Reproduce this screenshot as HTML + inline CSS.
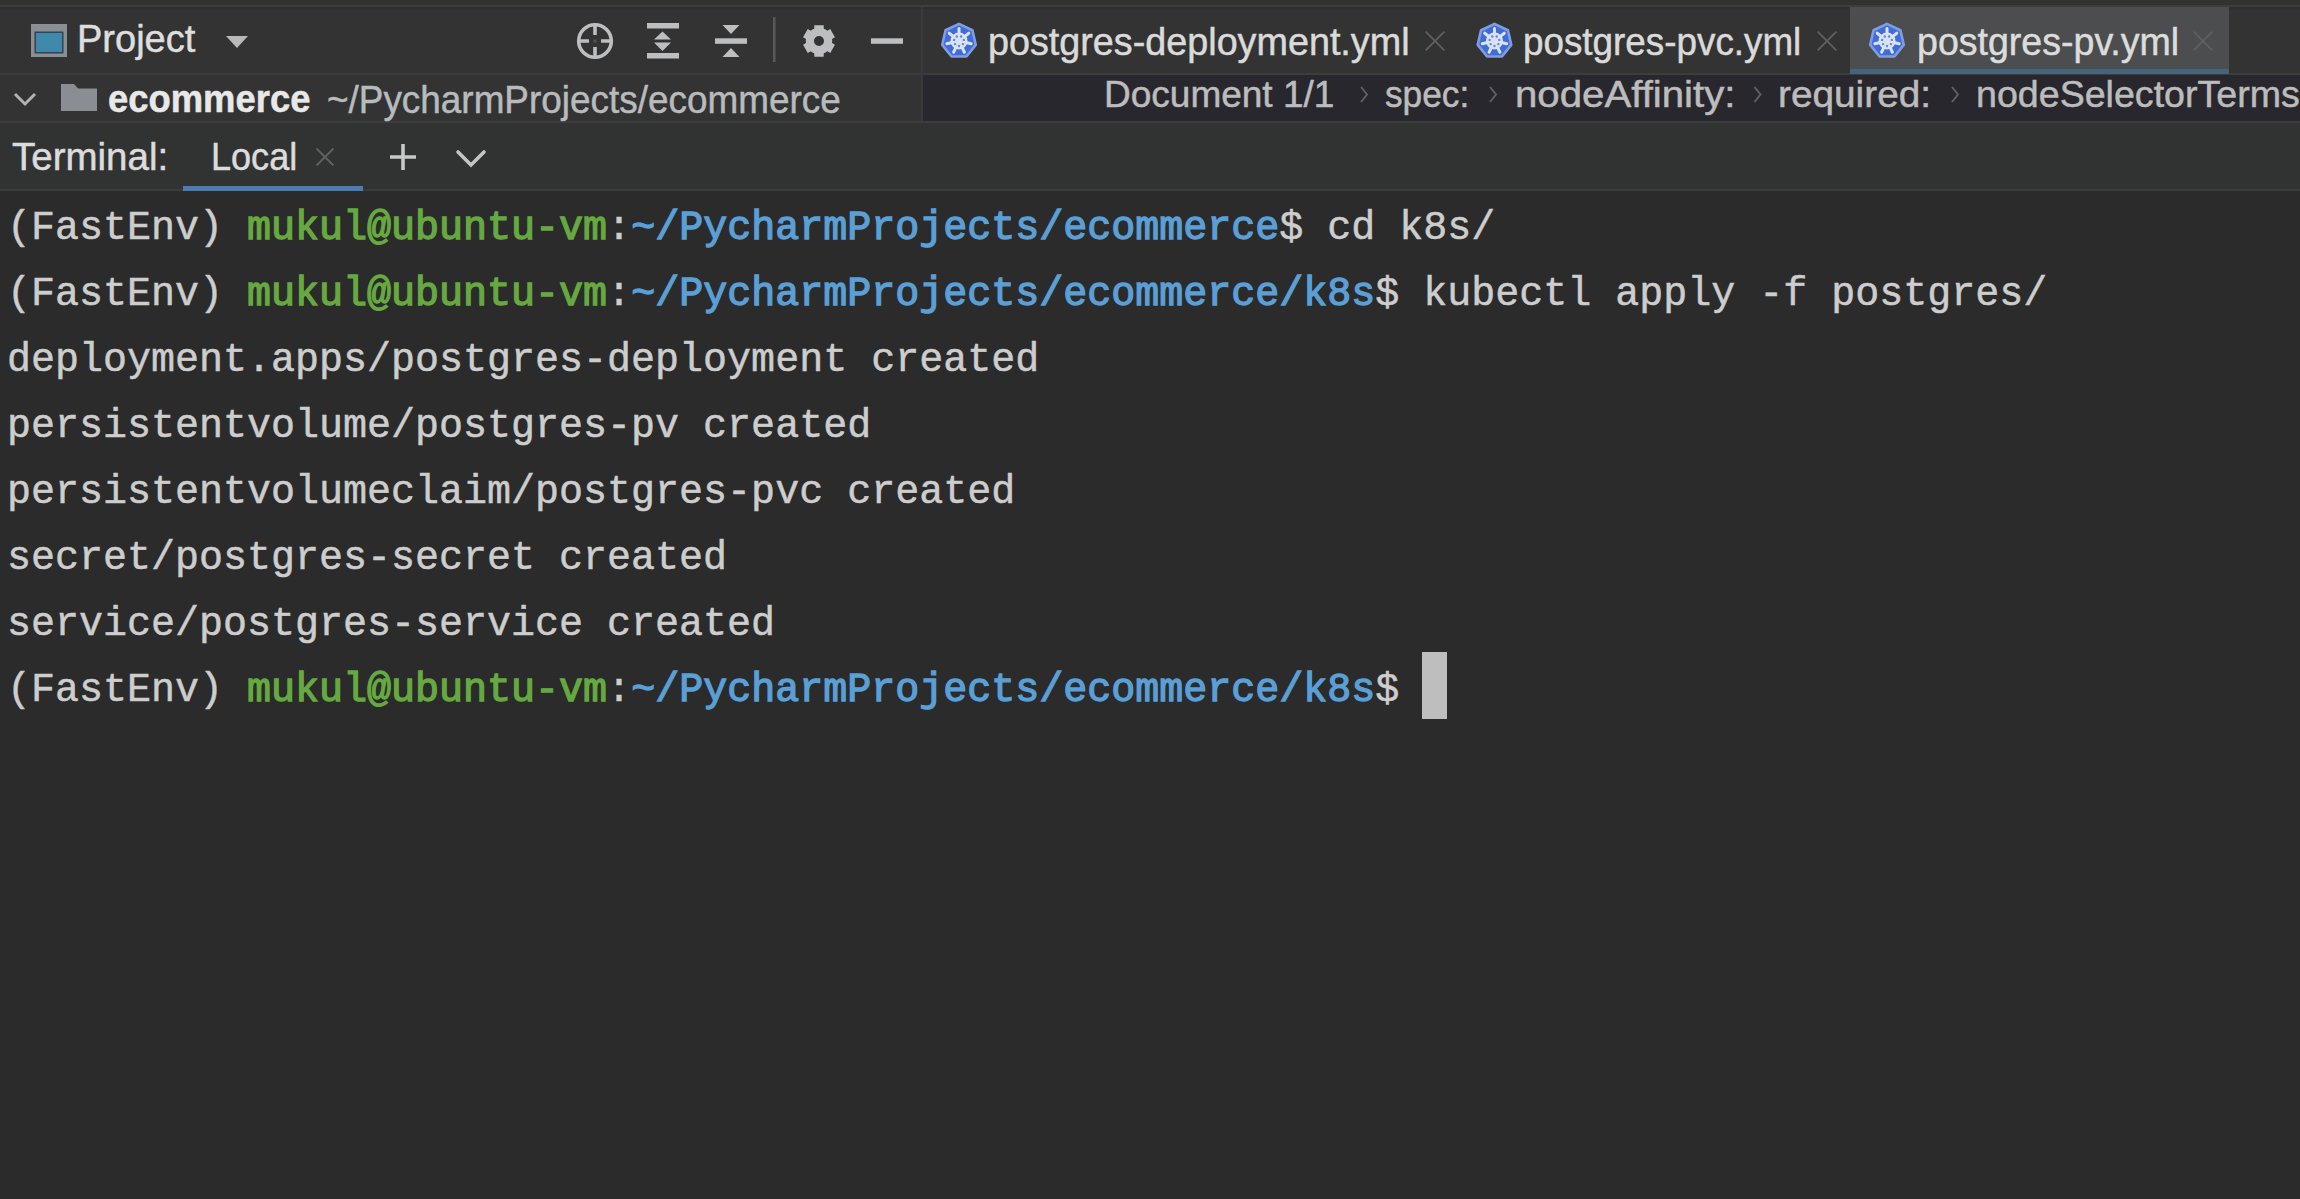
<!DOCTYPE html>
<html><head><meta charset="utf-8">
<style>
*{margin:0;padding:0;box-sizing:border-box}
html,body{width:2300px;height:1199px;overflow:hidden;background:#2b2b2b}
body{position:relative;font-family:"Liberation Sans",sans-serif}
.abs{position:absolute}
.ui{position:absolute;white-space:pre;line-height:1;-webkit-text-stroke:0.5px currentColor}
.term{position:absolute;left:7px;white-space:pre;font-family:"Liberation Mono",monospace;font-size:40px;line-height:66px;color:#cdcdcd;-webkit-text-stroke:0.5px currentColor}
.g{color:#66a940;-webkit-text-stroke:1.3px currentColor}
.b{color:#5a9fd6;-webkit-text-stroke:1.3px currentColor}
svg{position:absolute;left:0;top:0}
</style></head>
<body>
<div class="abs" style="left:0px;top:0px;width:2300px;height:5px;background:#323331"></div>
<div class="abs" style="left:0px;top:5px;width:2300px;height:2px;background:#3d3e3d"></div>
<div class="abs" style="left:0px;top:7px;width:2300px;height:67px;background:#323332"></div>
<div class="abs" style="left:0px;top:7px;width:2300px;height:2px;background:#2f2f31"></div>
<div class="abs" style="left:0px;top:73px;width:2300px;height:2px;background:#3c3d3d"></div>
<div class="abs" style="left:0px;top:75px;width:922px;height:47px;background:#323332"></div>
<div class="abs" style="left:923px;top:75px;width:1377px;height:47px;background:#28272e"></div>
<div class="abs" style="left:921px;top:7px;width:2px;height:115px;background:#393a3b"></div>
<div class="abs" style="left:0px;top:121px;width:2300px;height:2px;background:#3c3d3d"></div>
<div class="abs" style="left:0px;top:123px;width:2300px;height:66px;background:#313232"></div>
<div class="abs" style="left:0px;top:189px;width:2300px;height:2px;background:#3b3c3c"></div>
<div class="abs" style="left:0px;top:191px;width:2300px;height:1008px;background:#2b2b2b"></div>
<div class="abs" style="left:1850px;top:7px;width:379px;height:67px;background:#4b4d4e"></div>
<div class="abs" style="left:1850px;top:69px;width:379px;height:5px;background:#44647c"></div>
<div class="abs" style="left:183px;top:186px;width:180px;height:5px;background:#4d7cb5"></div>
<div class="abs" style="left:1422px;top:652px;width:25px;height:67px;background:#bebebe"></div>
<div class="ui" style="left:77px;top:20px;font-size:38px;color:#dedede;font-weight:normal;">Project</div>
<div class="ui" style="left:988px;top:23px;font-size:38px;color:#dadada;font-weight:normal;transform:scaleX(0.993);transform-origin:0 0;">postgres-deployment.yml</div>
<div class="ui" style="left:1523px;top:23px;font-size:38px;color:#dadada;font-weight:normal;transform:scaleX(0.969);transform-origin:0 0;">postgres-pvc.yml</div>
<div class="ui" style="left:1917px;top:23px;font-size:38px;color:#dcdcdc;font-weight:normal;transform:scaleX(0.988);transform-origin:0 0;">postgres-pv.yml</div>
<div class="ui" style="left:108px;top:80px;font-size:38px;color:#e8e8e8;font-weight:bold;transform:scaleX(0.958);transform-origin:0 0;">ecommerce</div>
<div class="ui" style="left:327px;top:81px;font-size:38px;color:#b8bbbe;font-weight:normal;transform:scaleX(0.971);transform-origin:0 0;">~/PycharmProjects/ecommerce</div>
<div class="ui" style="left:1104px;top:76px;font-size:37px;color:#bcbcbc;font-weight:normal;">Document 1/1</div>
<div class="ui" style="left:1385px;top:76px;font-size:37px;color:#bcbcbc;font-weight:normal;transform:scaleX(0.952);transform-origin:0 0;">spec:</div>
<div class="ui" style="left:1515px;top:76px;font-size:37px;color:#bcbcbc;font-weight:normal;transform:scaleX(1.086);transform-origin:0 0;">nodeAffinity:</div>
<div class="ui" style="left:1778px;top:76px;font-size:37px;color:#bcbcbc;font-weight:normal;transform:scaleX(1.048);transform-origin:0 0;">required:</div>
<div class="ui" style="left:1976px;top:76px;font-size:37px;color:#bcbcbc;font-weight:normal;transform:scaleX(1.016);transform-origin:0 0;">nodeSelectorTerms:</div>
<div class="ui" style="left:12px;top:138px;font-size:38px;color:#dcdcdc;font-weight:normal;transform:scaleX(1.013);transform-origin:0 0;">Terminal:</div>
<div class="ui" style="left:211px;top:138px;font-size:38px;color:#dcdcdc;font-weight:normal;transform:scaleX(0.949);transform-origin:0 0;">Local</div>
<div class="term" style="top:196px">(FastEnv) <span class="g">mukul@ubuntu-vm</span>:<span class="b">~/PycharmProjects/ecommerce</span>$ cd k8s/</div>
<div class="term" style="top:262px">(FastEnv) <span class="g">mukul@ubuntu-vm</span>:<span class="b">~/PycharmProjects/ecommerce/k8s</span>$ kubectl apply -f postgres/</div>
<div class="term" style="top:328px">deployment.apps/postgres-deployment created</div>
<div class="term" style="top:394px">persistentvolume/postgres-pv created</div>
<div class="term" style="top:460px">persistentvolumeclaim/postgres-pvc created</div>
<div class="term" style="top:526px">secret/postgres-secret created</div>
<div class="term" style="top:592px">service/postgres-service created</div>
<div class="term" style="top:658px">(FastEnv) <span class="g">mukul@ubuntu-vm</span>:<span class="b">~/PycharmProjects/ecommerce/k8s</span>$ </div>
<svg width="2300" height="200" viewBox="0 0 2300 200"><rect x="31" y="24" width="36" height="33" fill="#8b8e92"/><rect x="34.5" y="31.5" width="29" height="22" fill="#34434d"/><rect x="36" y="33" width="26" height="19" fill="#3f8aab"/><path d="M226 36H248L237 48Z" fill="#b9b9b9"/><circle cx="595" cy="41" r="16.3" fill="none" stroke="#bcbec0" stroke-width="3.6"/><path d="M595 25V35M595 47V57M579 41H589M601 41H611" stroke="#bcbec0" stroke-width="3.6"/><rect x="593.5" y="39.5" width="3" height="3" fill="#555"/><rect x="647" y="23" width="32" height="5.5" fill="#bcbec0"/><rect x="647" y="53" width="32" height="5.5" fill="#bcbec0"/><path d="M654 39.5H671L662.5 31.5Z M654 42.5H671L662.5 51Z" fill="#bcbec0"/><path d="M722.5 25H739.5L731 34Z M722.5 57H739.5L731 48Z" fill="#bcbec0"/><rect x="715" y="38.3" width="32" height="5.5" fill="#bcbec0"/><rect x="773" y="17" width="2.5" height="45" fill="#57595b"/><path d="M814.23 28.69L814.31 25.28L823.69 25.28L823.77 28.69A13.2 13.2 0 0 1 827.27 30.71L827.27 30.71L830.26 29.08L834.95 37.20L832.04 38.98A13.2 13.2 0 0 1 832.04 43.02L832.04 43.02L834.95 44.80L830.26 52.92L827.27 51.29A13.2 13.2 0 0 1 823.77 53.31L823.77 53.31L823.69 56.72L814.31 56.72L814.23 53.31A13.2 13.2 0 0 1 810.73 51.29L810.73 51.29L807.74 52.92L803.05 44.80L805.96 43.02A13.2 13.2 0 0 1 805.96 38.98L805.96 38.98L803.05 37.20L807.74 29.08L810.73 30.71A13.2 13.2 0 0 1 814.23 28.69Z M824 41A5 5 0 1 0 814 41A5 5 0 1 0 824 41Z" fill="#bcbec0" fill-rule="evenodd"/><rect x="871" y="38.3" width="32" height="5.5" fill="#bcbec0"/><polygon points="959.00,23.80 972.45,30.28 975.77,44.83 966.46,56.50 951.54,56.50 942.23,44.83 945.55,30.28" fill="#3f6dd8" stroke="#819de0" stroke-width="2.6" stroke-linejoin="round"/><g stroke="#d8e3fa" stroke-width="3" stroke-linecap="round"><line x1="959.00" y1="34.00" x2="959.00" y2="28.50"/><line x1="964.47" y1="36.64" x2="968.77" y2="33.21"/><line x1="965.82" y1="42.56" x2="971.19" y2="43.78"/><line x1="962.04" y1="47.31" x2="964.42" y2="52.26"/><line x1="955.96" y1="47.31" x2="953.58" y2="52.26"/><line x1="952.18" y1="42.56" x2="946.81" y2="43.78"/><line x1="953.53" y1="36.64" x2="949.23" y2="33.21"/></g><circle cx="959" cy="41" r="8.5" fill="#d8e3fa"/><g fill="#6a86c8"><circle cx="961.17" cy="36.50" r="1.2"/><circle cx="963.87" cy="39.89" r="1.2"/><circle cx="962.91" cy="44.12" r="1.2"/><circle cx="959.00" cy="46.00" r="1.2"/><circle cx="955.09" cy="44.12" r="1.2"/><circle cx="954.13" cy="39.89" r="1.2"/><circle cx="956.83" cy="36.50" r="1.2"/></g><polygon points="1494.50,23.80 1507.95,30.28 1511.27,44.83 1501.96,56.50 1487.04,56.50 1477.73,44.83 1481.05,30.28" fill="#3f6dd8" stroke="#819de0" stroke-width="2.6" stroke-linejoin="round"/><g stroke="#d8e3fa" stroke-width="3" stroke-linecap="round"><line x1="1494.50" y1="34.00" x2="1494.50" y2="28.50"/><line x1="1499.97" y1="36.64" x2="1504.27" y2="33.21"/><line x1="1501.32" y1="42.56" x2="1506.69" y2="43.78"/><line x1="1497.54" y1="47.31" x2="1499.92" y2="52.26"/><line x1="1491.46" y1="47.31" x2="1489.08" y2="52.26"/><line x1="1487.68" y1="42.56" x2="1482.31" y2="43.78"/><line x1="1489.03" y1="36.64" x2="1484.73" y2="33.21"/></g><circle cx="1494.5" cy="41" r="8.5" fill="#d8e3fa"/><g fill="#6a86c8"><circle cx="1496.67" cy="36.50" r="1.2"/><circle cx="1499.37" cy="39.89" r="1.2"/><circle cx="1498.41" cy="44.12" r="1.2"/><circle cx="1494.50" cy="46.00" r="1.2"/><circle cx="1490.59" cy="44.12" r="1.2"/><circle cx="1489.63" cy="39.89" r="1.2"/><circle cx="1492.33" cy="36.50" r="1.2"/></g><polygon points="1887.00,23.80 1900.45,30.28 1903.77,44.83 1894.46,56.50 1879.54,56.50 1870.23,44.83 1873.55,30.28" fill="#3f6dd8" stroke="#819de0" stroke-width="2.6" stroke-linejoin="round"/><g stroke="#d8e3fa" stroke-width="3" stroke-linecap="round"><line x1="1887.00" y1="34.00" x2="1887.00" y2="28.50"/><line x1="1892.47" y1="36.64" x2="1896.77" y2="33.21"/><line x1="1893.82" y1="42.56" x2="1899.19" y2="43.78"/><line x1="1890.04" y1="47.31" x2="1892.42" y2="52.26"/><line x1="1883.96" y1="47.31" x2="1881.58" y2="52.26"/><line x1="1880.18" y1="42.56" x2="1874.81" y2="43.78"/><line x1="1881.53" y1="36.64" x2="1877.23" y2="33.21"/></g><circle cx="1887" cy="41" r="8.5" fill="#d8e3fa"/><g fill="#6a86c8"><circle cx="1889.17" cy="36.50" r="1.2"/><circle cx="1891.87" cy="39.89" r="1.2"/><circle cx="1890.91" cy="44.12" r="1.2"/><circle cx="1887.00" cy="46.00" r="1.2"/><circle cx="1883.09" cy="44.12" r="1.2"/><circle cx="1882.13" cy="39.89" r="1.2"/><circle cx="1884.83" cy="36.50" r="1.2"/></g><path d="M1425.7 31.7L1444.3 50.3M1444.3 31.7L1425.7 50.3" stroke="#5f6061" stroke-width="1.8" fill="none"/><path d="M1817.7 31.7L1836.3 50.3M1836.3 31.7L1817.7 50.3" stroke="#5f6061" stroke-width="1.8" fill="none"/><path d="M2193.7 31.7L2212.3 50.3M2212.3 31.7L2193.7 50.3" stroke="#5f6061" stroke-width="1.8" fill="none"/><path d="M316.5 148.5L333.5 165.5M333.5 148.5L316.5 165.5" stroke="#5f6061" stroke-width="1.8" fill="none"/><path d="M15 94L25 104L35 94" fill="none" stroke="#b3b3b3" stroke-width="3"/><path d="M61 84H74L78 88.5H97V111H61Z" fill="#8a8d93"/><path d="M1361 87L1367 94.5L1361 102" fill="none" stroke="#616165" stroke-width="1.9"/><path d="M1490 87L1496 94.5L1490 102" fill="none" stroke="#616165" stroke-width="1.9"/><path d="M1754.5 87L1760.5 94.5L1754.5 102" fill="none" stroke="#616165" stroke-width="1.9"/><path d="M1952 87L1958 94.5L1952 102" fill="none" stroke="#616165" stroke-width="1.9"/><path d="M403 144V170M390 157H416" stroke="#c8c8c8" stroke-width="3.6"/><path d="M458 152L471 165L484 152" fill="none" stroke="#c4c4c4" stroke-width="3.6" stroke-linecap="round"/></svg>
</body></html>
